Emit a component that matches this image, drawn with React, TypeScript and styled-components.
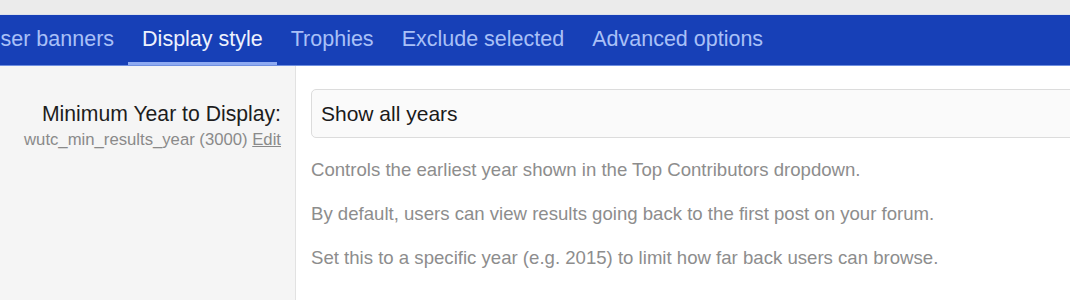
import React from "react";
import styled, { createGlobalStyle } from "styled-components";

const Global = createGlobalStyle`
  html, body { margin: 0; padding: 0; background: #ffffff; }
  body { font-family: "Liberation Sans", Arial, sans-serif; overflow: hidden; }
  * { box-sizing: border-box; }
`;

const Page = styled.div`
  width: 1070px;
  height: 300px;
  display: flex;
  flex-direction: column;
  overflow: hidden;
`;

const TopStrip = styled.div`
  height: 15px;
  background: #ebebeb;
  border-bottom: 1px solid #dde1ea;
  flex: none;
`;

const TabBar = styled.nav`
  height: 51px;
  background: #1740b7;
  border-bottom: 1px solid #6f8fe0;
  display: flex;
  align-items: stretch;
  margin-left: -29px;
  flex: none;
`;

const Tab = styled.a<{ $active?: boolean }>`
  display: flex;
  align-items: center;
  padding: 2px 14px 0;
  font-size: 21.5px;
  white-space: nowrap;
  color: ${(p) => (p.$active ? "#eef2fd" : "#a9c0f7")};
  border-bottom: 3px solid ${(p) => (p.$active ? "#8eaaf2" : "transparent")};
  cursor: pointer;
`;

const Body = styled.div`
  flex: 1;
  display: grid;
  grid-template-columns: 296px 1fr;
`;

const LabelCol = styled.div`
  background: #f5f5f5;
  border-right: 1px solid #e2e2e2;
  padding: 33.5px 14px 0 0;
  text-align: right;
`;

const Label = styled.div`
  font-size: 21.2px;
  color: #1d1d1d;
  line-height: 28px;
`;

const Hint = styled.div`
  font-size: 16.7px;
  color: #8a8a8a;
  line-height: 22px;
  margin-top: 1px;
`;

const EditLink = styled.span`
  text-decoration: underline;
  color: #8a8a8a;
`;

const InputCol = styled.div`
  padding: 23px 0 0 15px;
  min-width: 0;
`;

const Select = styled.div`
  height: 49px;
  width: 790px;
  border: 1px solid #dcdcdc;
  border-radius: 5px;
  background: #fafafa;
  display: flex;
  align-items: center;
  padding: 0 9px;
  font-size: 21px;
  color: #1a1a1a;
`;

const Explain = styled.div`
  margin-top: 20px;
  display: flex;
  flex-direction: column;
  gap: 20px;
`;

const Para = styled.p`
  margin: 0;
  font-size: 18.6px;
  line-height: 24px;
  color: #8d8d8d;
`;

export default function App() {
  return (
    <Page>
      <Global />
      <TopStrip />
      <TabBar>
        <Tab>User banners</Tab>
        <Tab $active>Display style</Tab>
        <Tab>Trophies</Tab>
        <Tab>Exclude selected</Tab>
        <Tab>Advanced options</Tab>
      </TabBar>
      <Body>
        <LabelCol>
          <Label>Minimum Year to Display:</Label>
          <Hint>
            wutc_min_results_year (3000) <EditLink>Edit</EditLink>
          </Hint>
        </LabelCol>
        <InputCol>
          <Select>Show all years</Select>
          <Explain>
            <Para>Controls the earliest year shown in the Top Contributors dropdown.</Para>
            <Para>By default, users can view results going back to the first post on your forum.</Para>
            <Para>Set this to a specific year (e.g. 2015) to limit how far back users can browse.</Para>
          </Explain>
        </InputCol>
      </Body>
    </Page>
  );
}
